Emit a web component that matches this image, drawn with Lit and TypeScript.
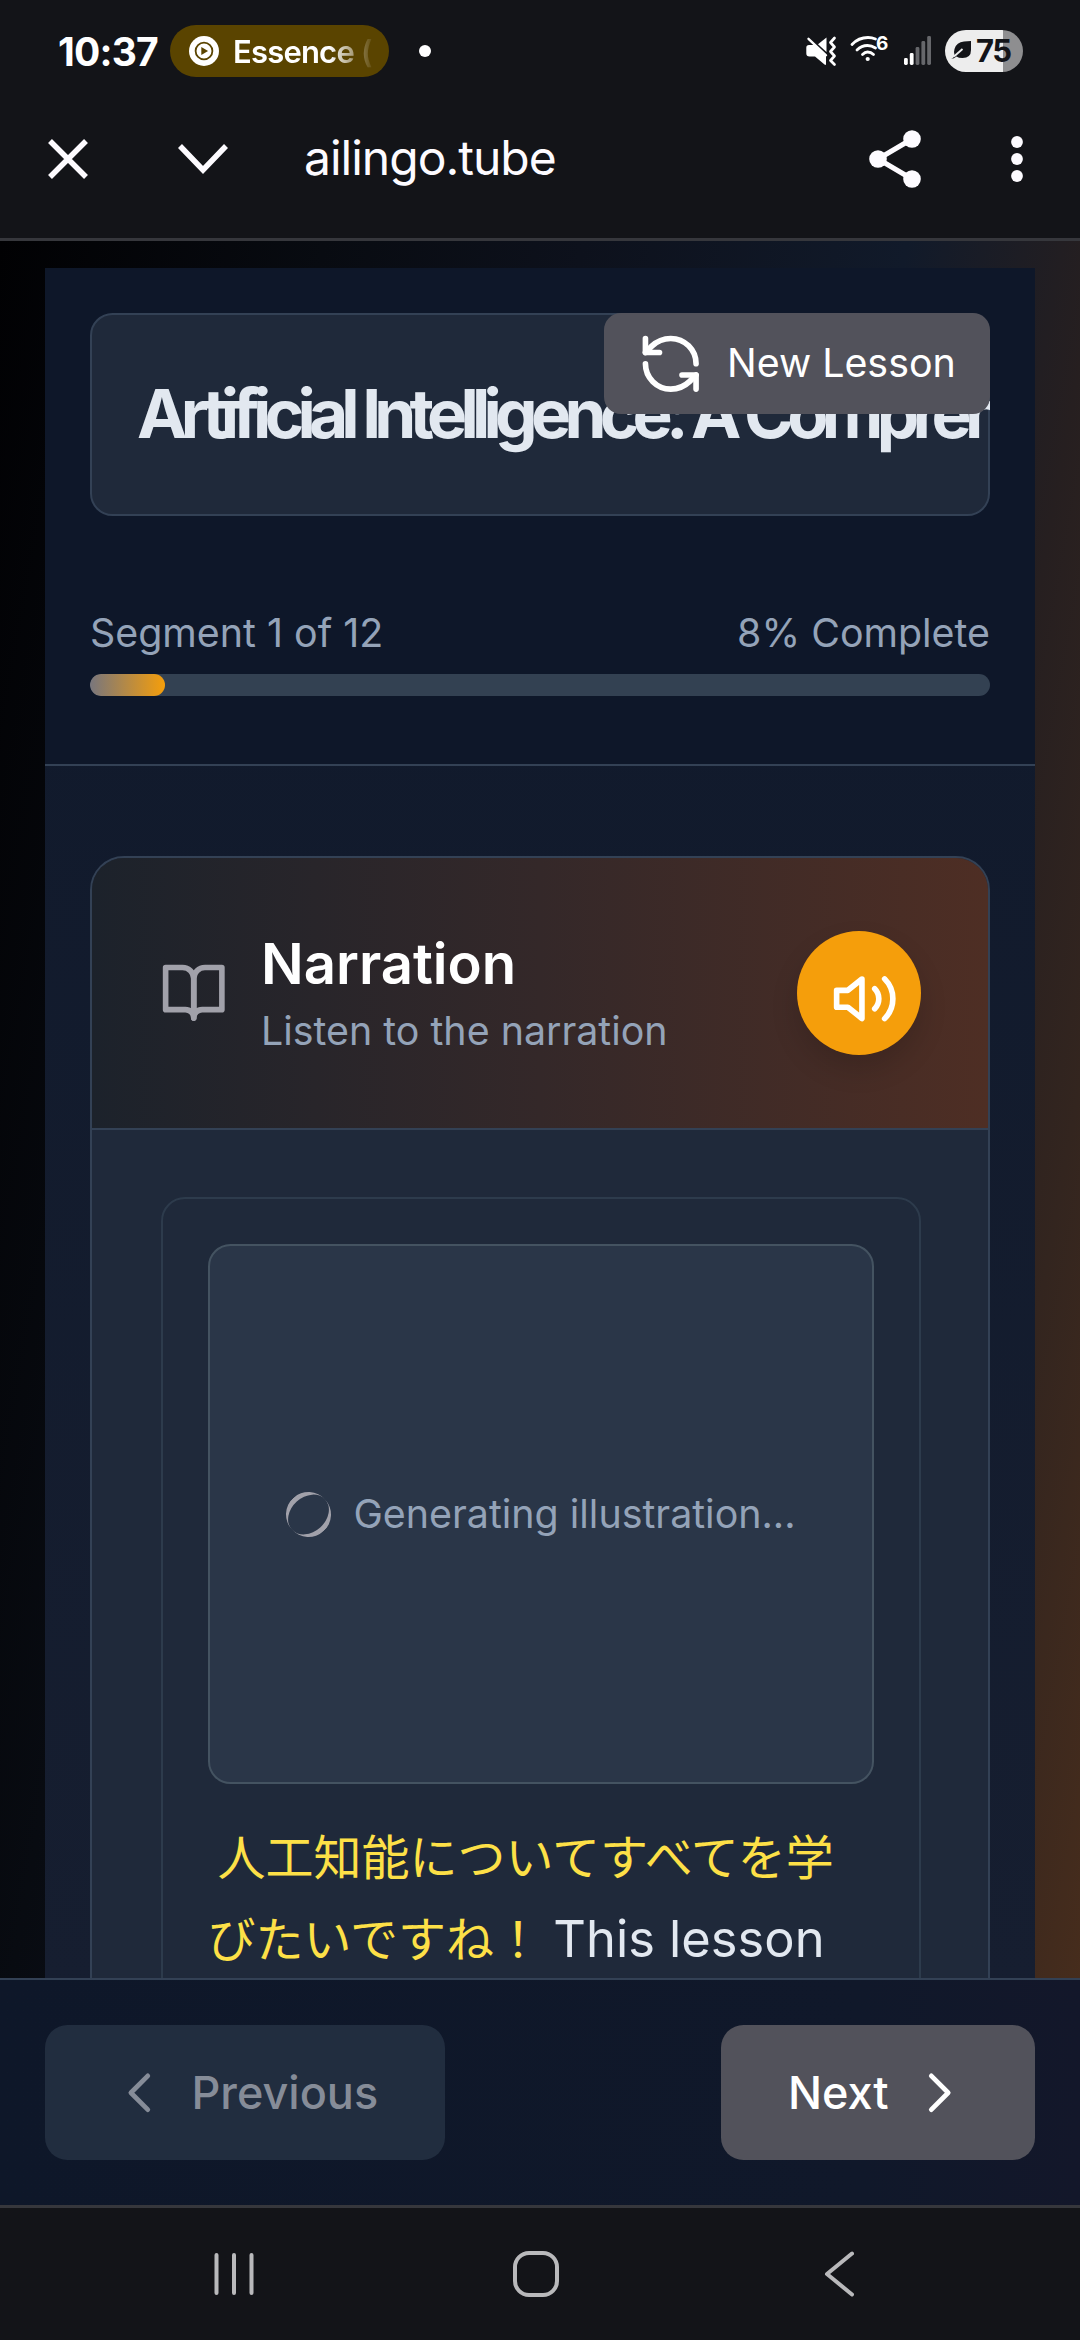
import { LitElement, html, css, svg } from "lit";
import { customElement, property } from "lit/decorators.js";

@customElement("status-bar")
class StatusBar extends LitElement {
  static styles = css`
    :host { display: flex; align-items: center; height: 102px; padding: 0 57px 0 58px; box-sizing: border-box; color: #fff; }
    .time { width: 112px; font: 700 39px Inter, sans-serif; letter-spacing: -0.8px; white-space: nowrap; }
    .pill { display: flex; align-items: center; gap: 14px; width: 219px; height: 52px; border-radius: 26px; background: #5a4400; padding-left: 19px; box-sizing: border-box; }
    .pill svg { flex: none; }
    .app { width: 146px; overflow: hidden; white-space: nowrap; font: 600 31px Inter, sans-serif; letter-spacing: -0.8px; -webkit-mask-image: linear-gradient(to right, #000 96px, transparent 142px); mask-image: linear-gradient(to right, #000 96px, transparent 142px); }
    .dot { width: 12px; height: 12px; border-radius: 6px; background: #fff; margin-left: 30px; }
    .icons { margin-left: auto; display: flex; align-items: center; }
    .gen { font: 700 19px Inter, sans-serif; }
    .battery { display: flex; align-items: center; width: 78px; height: 42px; border-radius: 21px; box-sizing: border-box; padding-left: 5px; gap: 4px; margin-left: 13px; background: linear-gradient(to right, #ededed 58px, #8e8e90 58px); color: #131418; font: 700 31px/42px Inter, sans-serif; letter-spacing: -1.5px; }
  `;
  render() {
    const tops = [58, 53, 47, 41, 36];
    return html`
      <span class="time">10:37</span>
      <div class="pill">
        <svg width="30" height="30" viewBox="0 0 30 30"><circle cx="15" cy="15" r="15" fill="#fff"/><circle cx="15" cy="15" r="8.4" fill="none" stroke="#5a4400" stroke-width="1.8"/><path d="M12.3 11l6.8 4-6.8 4z" fill="#5a4400"/></svg>
        <span class="app">Essence (</span>
      </div>
      <span class="dot"></span>
      <div class="icons">
        <svg width="126" height="42" viewBox="806 30 126 42">
          <path d="M809 45h6.500l10.500 9.500v9.500q0 1.500-1.500.5L815 56.500h-5.500q-3.200 0-3.200-3.200v-5.500q0-2.800 2.700-2.800z" fill="#fff"/>
          <path d="M826.500 37.500v14.500L818 44.300z" fill="#fff"/>
          <path d="M808.500 38.800l17.500 16.500" stroke="#fff" stroke-width="2.400" stroke-linecap="round"/>
          <path d="M834.500 38l-4 4.500 4 4.500-4 4.500 4 4.500-4 4.500 4 4" fill="none" stroke="#fff" stroke-width="2.700" stroke-linejoin="round" stroke-linecap="round"/>
          <g fill="none" stroke="#fff" stroke-width="2.800" stroke-linecap="round"><path d="M852 44.500q6.500-7 16-7 4 0 7.500 1.500M857 50q4.500-4.500 10.500-4.500 4 0 8 2.500M862.500 54.500q2.500-2.500 5-2.500 3.500 0 6 2.500"/></g>
          <circle cx="867.700" cy="59" r="2.100" fill="#fff"/>
          <text class="gen" x="876" y="49.500" fill="#fff">6</text>
          ${tops.map((t, i) => svg`<rect x=${904 + i * 5.8} y=${t} width="3.8" height=${65 - t} rx="1.4" fill=${i < 2 ? "#fff" : "#66676b"}/>`)}
        </svg>
        <div class="battery">
          <svg width="22" height="22" viewBox="0 0 22 22"><path d="M21 1v9q0 8-8.500 8-4 0-6-1.500Q4 18.500 1 19q3.500-1.500 3.500-4-1-3 0-6Q6.500 2 14 1.500z" fill="#131418"/><path d="M4 16.500l8.500-7.500" stroke="#ededed" stroke-width="1.800"/></svg>
          <span>75</span>
        </div>
      </div>`;
  }
}

@customElement("browser-bar")
class BrowserBar extends LitElement {
  static styles = css`
    :host { display: flex; align-items: center; height: 139px; padding: 0 57px 22px 48px; box-sizing: border-box; border-bottom: 3px solid #36373c; color: #fdfbff; }
    .close { margin-right: 90px; }
    .url { margin-left: 76px; padding-bottom: 3px; font: 400 48px Inter, sans-serif; letter-spacing: -1px; }
    .share { margin-left: auto; margin-right: 90px; }
  `;
  render() {
    return html`
      <svg class="close" width="40" height="40" viewBox="0 0 40 40"><path d="M2 2l36 36M38 2L2 38" stroke="currentColor" stroke-width="5.500"/></svg>
      <svg width="50" height="40" viewBox="0 0 50 40"><path d="M2 7l23 24L48 7" fill="none" stroke="currentColor" stroke-width="5.500"/></svg>
      <span class="url">ailingo.tube</span>
      <svg class="share" width="52" height="58" viewBox="0 0 52 58" fill="currentColor"><path d="M43 9L9 29l34 20" fill="none" stroke="currentColor" stroke-width="5"/><circle cx="9" cy="29" r="8.800"/><circle cx="43" cy="9" r="8.800"/><circle cx="43" cy="49" r="8.800"/></svg>
      <svg width="12" height="46" viewBox="0 0 12 46" fill="currentColor"><circle cx="6" cy="6" r="5.900"/><circle cx="6" cy="23" r="5.900"/><circle cx="6" cy="40" r="5.900"/></svg>`;
  }
}

@customElement("lesson-header")
class LessonHeader extends LitElement {
  @property({ type: Number }) segment = 1;
  @property({ type: Number }) total = 12;
  static styles = css`
    :host { display: block; height: 498px; padding: 45px; box-sizing: border-box; border-bottom: 2px solid #334155; background: #0e1729; }
    .title-card { position: relative; height: 203px; border-radius: 22.500px; border: 2px solid #334155; background: #1f293a; box-sizing: border-box; }
    .clip { margin: -2px; padding: 2px 0 0 47px; height: 203px; box-sizing: border-box; overflow: hidden; }
    h1 { margin: 0; font: 700 67.500px/197px Inter, sans-serif; letter-spacing: -6.750px; white-space: nowrap; color: #e2e8f0; }
    .new { position: absolute; top: -2px; right: -2px; width: 386px; height: 101px; box-sizing: border-box; padding: 0 0 0 33px; border-radius: 17px; background: #52525b; color: #fff; display: flex; align-items: center; gap: 22.500px; font: 400 39.375px Inter, sans-serif; white-space: nowrap; border: 0; }
    .new span { padding-bottom: 3px; }
    .labels { display: flex; justify-content: space-between; margin-top: 87px; font: 400 39.375px/60px Inter, sans-serif; color: #94a3b8; }
    .track { margin-top: 11px; height: 22px; border-radius: 11px; background: #334152; overflow: hidden; }
    .fill { height: 100%; border-radius: 11px; background: linear-gradient(to right, #78767d, #f59e0b); }
  `;
  render() {
    const pct = (this.segment / this.total) * 100;
    return html`
      <div class="title-card">
        <div class="clip"><h1>Artificial Intelligence: A Comprehensive</h1></div>
        <button class="new">
          <svg width="67.5" height="67.5" viewBox="0 0 24 24" fill="none" stroke="currentColor" stroke-width="2" stroke-linecap="round" stroke-linejoin="round"><path d="M21 12a9 9 0 0 0-9-9 9.750 9.750 0 0 0-6.740 2.740L3 8"/><path d="M3 3v5h5"/><path d="M3 12a9 9 0 0 0 9 9 9.750 9.750 0 0 0 6.740-2.740L21 16"/><path d="M16 16h5v5"/></svg>
          <span>New Lesson</span>
        </button>
      </div>
      <div class="labels"><span>Segment ${this.segment} of ${this.total}</span><span>${Math.round(pct)}% Complete</span></div>
      <div class="track"><div class="fill" style="width:${pct}%"></div></div>`;
  }
}

@customElement("narration-card")
class NarrationCard extends LitElement {
  static styles = css`
    :host { display: block; margin: 90px 45px 0; height: 1300px; border: 2px solid #334155; border-radius: 34px; background: #1f293a; box-sizing: border-box; overflow: hidden; font-family: Inter, sans-serif; }
    header { display: flex; align-items: center; height: 272px; box-sizing: border-box; padding: 0 67px 0 68px; border-bottom: 2px solid #334155; background: linear-gradient(to right, #1c222b, #342829 50%, #4e2e24); }
    .book { color: #a1a1aa; margin-right: 33.500px; }
    .heading { padding-bottom: 2px; }
    h2 { margin: 0; font: 600 56.250px/78px Inter, sans-serif; color: #fff; }
    p { margin: 0; font: 400 39.375px/56px Inter, sans-serif; color: #94a3b8; }
    .play { margin-left: auto; width: 124px; height: 124px; border-radius: 50%; background: #f59e0b; color: #fff; border: 0; padding: 11px 0 0 11px; box-sizing: border-box; display: flex; align-items: center; justify-content: center; box-shadow: 0 14px 28px rgba(0, 0, 0, 0.14); }
    .panel { margin: 67px 67px 0 68.500px; height: 1000px; padding: 45px; box-sizing: border-box; border: 2px solid #2d3b4c; border-radius: 24px; }
    .art { height: 540px; box-sizing: border-box; border: 2px solid #445361; border-radius: 22.500px; background: #2a3648; display: flex; align-items: center; justify-content: center; gap: 22.500px; font-size: 39.375px; color: #94a3b8; }
    .art .label { padding-bottom: 2px; }
    .spinner { width: 45px; height: 45px; box-sizing: border-box; border-radius: 50%; border-top: 5.600px solid #a1a1aa; border-bottom: 5.600px solid #a1a1aa; transform: rotate(-42deg); }
    .text { margin-top: 32px; font: 400 50.625px/82.300px Inter, "Noto Sans CJK JP", sans-serif; color: #e2e8f0; white-space: nowrap; }
    .ja { font-family: "Noto Sans CJK JP", sans-serif; font-size: 48px; color: #fde047; line-height: 1; }
    .first { padding-left: 10px; }
    .second { margin-right: -3px; }
  `;
  render() {
    return html`
      <header>
        <svg class="book" width="67.5" height="67.5" viewBox="0 0 24 24" fill="none" stroke="currentColor" stroke-width="2" stroke-linecap="round" stroke-linejoin="round"><path d="M2 3h6a4 4 0 0 1 4 4v14a3 3 0 0 0-3-3H2z"/><path d="M22 3h-6a4 4 0 0 0-4 4v14a3 3 0 0 1 3-3h7z"/></svg>
        <div class="heading"><h2>Narration</h2><p>Listen to the narration</p></div>
        <button class="play" aria-label="Play">
          <svg width="67.5" height="67.5" viewBox="0 0 24 24" fill="none" stroke="currentColor" stroke-width="2" stroke-linecap="round" stroke-linejoin="round"><path d="M11 5L6 9H2v6h4l5 4z"/><path d="M15.540 8.460a5 5 0 0 1 0 7.070M19.070 4.930a10 10 0 0 1 0 14.140"/></svg>
        </button>
      </header>
      <div class="panel">
        <div class="art"><span class="spinner"></span><span class="label">Generating illustration...</span></div>
        <div class="text">
          <div><span class="ja first">人工知能についてすべてを学</span></div>
          <div><span class="ja second">びたいですね！</span> This lesson</div>
        </div>
      </div>`;
  }
}

@customElement("lesson-footer")
class LessonFooter extends LitElement {
  static styles = css`
    :host { display: flex; justify-content: space-between; align-items: center; height: 227px; padding: 0 45px; box-sizing: border-box; border-top: 2px solid #334155; background: linear-gradient(to right, #0e1729, #10182a 80%, #13172a); }
    button { height: 135px; border: 0; border-radius: 22.500px; display: flex; align-items: center; box-sizing: border-box; font: 500 45px Inter, sans-serif; color: #fff; background: #52525b; }
    .prev { width: 400px; padding: 0 0 0 62px; gap: 17px; background: #212d3f; color: #868c98; }
    .next { width: 314px; padding: 0 0 0 67px; gap: 17px; }
  `;
  render() {
    const chev = (d: string) => html`<svg width="67.5" height="67.5" viewBox="0 0 24 24" fill="none" stroke="currentColor" stroke-width="1.7" stroke-linecap="round" stroke-linejoin="round"><path d=${d}/></svg>`;
    return html`<button class="prev">${chev("M14.500 18l-6-6 6-6")}<span>Previous</span></button>
      <button class="next"><span>Next</span>${chev("M9 18l6-6-6-6")}</button>`;
  }
}

@customElement("system-nav")
class SystemNav extends LitElement {
  static styles = css`
    :host { display: flex; align-items: flex-start; height: 135px; padding: 43px 0 0 214px; box-sizing: border-box; border-top: 3px solid #36373c; background: #131418; color: #b9b9bb; }
    svg { fill: none; stroke: currentColor; stroke-width: 4; stroke-linecap: round; stroke-linejoin: round; }
    .home { margin: 0 265px 0 259px; }
  `;
  render() {
    return html`
      <svg width="40" height="46" viewBox="0 0 40 46"><path d="M2.500 4v38M20 4v38M37.500 4v38"/></svg>
      <svg class="home" width="46" height="46" viewBox="0 0 46 46"><rect x="2" y="2" width="42" height="42" rx="14"/></svg>
      <svg width="30" height="46" viewBox="0 0 30 46"><path d="M28 2.500L3 23l25 20.500"/></svg>`;
  }
}

@customElement("app-root")
class AppRoot extends LitElement {
  static styles = css`
    :host { display: flex; flex-direction: column; width: 1080px; height: 2340px; overflow: hidden; background: #131418; }
    .page { height: 1737px; flex: none; overflow: hidden; padding: 27px 45px 0; box-sizing: border-box; background: linear-gradient(to bottom right, #010103, #080b11 15%, #0d111c 27%, #111a2a 42%, #261f20 51%, #33251f 57%, #4a2e1c 66%) 0 0 / 1080px 6000px no-repeat; }
    .lesson { height: 1720px; background: linear-gradient(#111a2c 400px, #161e30); }
  `;
  render() {
    return html`
      <status-bar></status-bar>
      <browser-bar></browser-bar>
      <div class="page"><div class="lesson"><lesson-header></lesson-header><narration-card></narration-card></div></div>
      <lesson-footer></lesson-footer>
      <system-nav></system-nav>`;
  }
}
